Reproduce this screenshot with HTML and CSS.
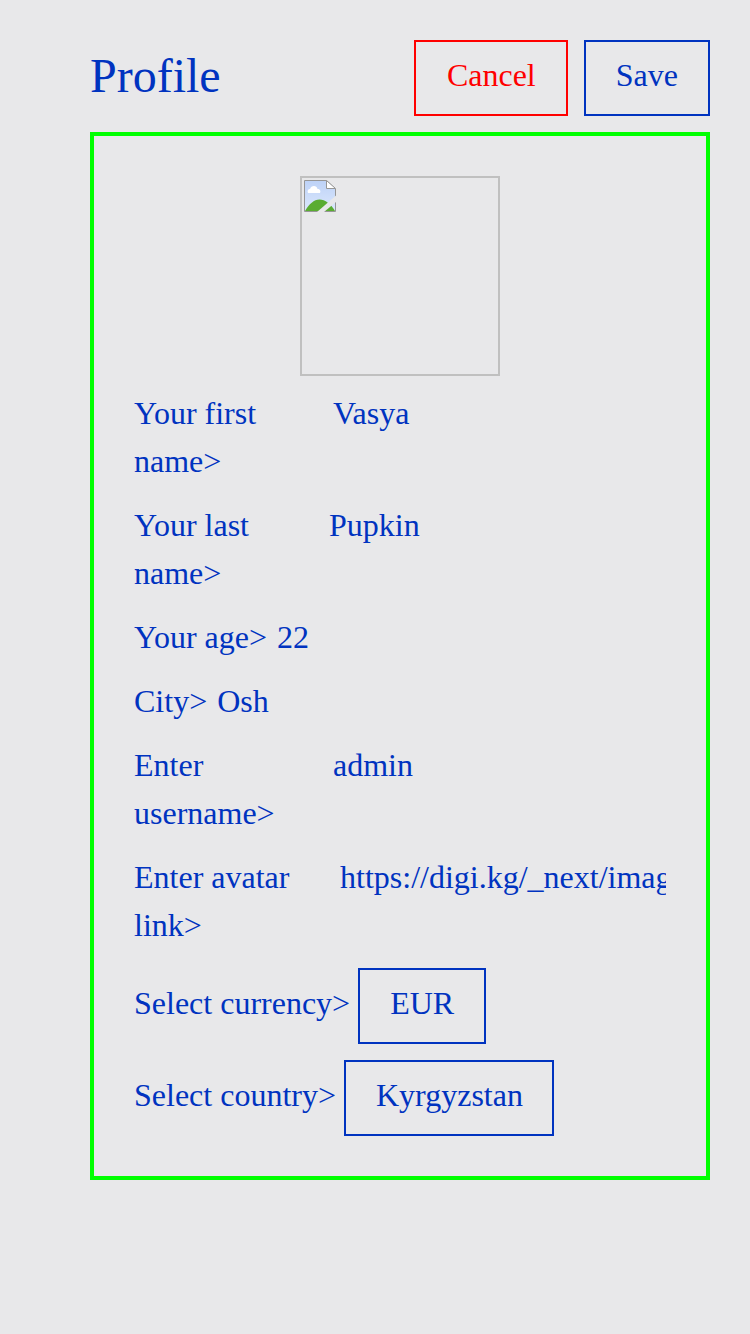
FILE: index.html
```html
<!DOCTYPE html>
<html lang="en">
<head>
<meta charset="utf-8">
<title>Profile</title>
<link rel="stylesheet" href="styles.css">
</head>
<body>
<main class="page">
<header class="header">
<h1 class="title">Profile</h1>
<div class="actions"><button class="button cancel">Cancel</button><button class="button">Save</button></div>
</header>
<section class="card">
<div class="avatar">
<svg class="broken" width="32" height="32" viewBox="0 0 32 32">
<defs><linearGradient id="sky" x1="0" y1="0" x2="0" y2="1"><stop offset="0" stop-color="#bdd2f7"/><stop offset="1" stop-color="#dce8fc"/></linearGradient></defs>
<path d="M.5 .5H22.5L31.5 9V31.5H.5Z" fill="url(#sky)"/>
<path d="M4 13C3 11 4 9 6 9C7 5 13 5 13.5 9C16 9 17 11 16 13Z" fill="#fff"/>
<path d="M1 31C5 24 10 19.5 15.500 19.500C21 19.500 27 24 31 31Z" fill="#5aac32"/>
<path d="M.5 .5H22.5L31.5 9V31.5H.5Z" fill="none" stroke="#969696"/>
<path d="M22.5 .5V8.5H31.5Z" fill="#fff" stroke="#969696"/>
<path d="M13 32L32 15.500V22L20 32Z" fill="#e8e8ea"/>
</svg>
</div>
<div class="row"><span class="label">Your first name&gt;</span><span class="value first">Vasya</span></div>
<div class="row"><span class="label">Your last name&gt;</span><span class="value last">Pupkin</span></div>
<div class="row"><span>Your age&gt;</span><span class="value">22</span></div>
<div class="row"><span>City&gt;</span><span class="value">Osh</span></div>
<div class="row"><span class="label">Enter username&gt;</span><span class="value user">admin</span></div>
<div class="row"><span class="label wide">Enter avatar link&gt;</span><span class="value link">https://digi.kg/_next/imag</span></div>
<div class="choices">
<div class="row pick"><span class="caption">Select currency&gt;</span><button class="button">EUR</button></div>
<div class="row pick"><span class="caption">Select country&gt;</span><button class="button country">Kyrgyzstan</button></div>
</div>
</section>
</main>
</body>
</html>
```
FILE: styles.css
```css
* { box-sizing: border-box; }
body { margin: 0; background: #e8e8ea; color: #0033c0; font: 32px/48px "Liberation Serif", serif; }
.page { padding: 40px 40px 0 90px; }
.header { display: flex; justify-content: space-between; height: 76px; margin-bottom: 16px; }
.title { margin: 0; font-size: 48px; line-height: 72px; font-weight: 400; }
.actions { display: flex; gap: 16px; }
.button { height: 76px; padding: 0 30px 6px; border: 2px solid #0033c0; background: none; color: inherit; font: inherit; }
.cancel { width: 154px; padding-left: 31px; border-color: #f00; color: #f00; }
.card { display: flex; flex-direction: column; gap: 16px; height: 1048px; padding: 40px; border: 4px solid #0f0; }
.avatar { flex: none; width: 200px; height: 200px; margin: 0 auto -3px; padding: 2px; border: 2px solid #c0c0c0; }
.broken { display: block; }
.row { display: flex; flex: none; white-space: nowrap; }
.label { width: 195px; padding-right: 50px; white-space: normal; }
.value { margin-left: 10px; }
.first, .user { margin-left: 4px; }
.last { margin-left: 0; }
.wide { width: 206px; }
.link { flex: 1; min-width: 0; margin-left: 0; overflow: hidden; }
.choices { display: flex; flex-direction: column; gap: 16px; margin-top: 3px; }
.pick { gap: 8px; align-items: center; }
.caption { padding-bottom: 6px; }
.country { width: 210px; }
```
